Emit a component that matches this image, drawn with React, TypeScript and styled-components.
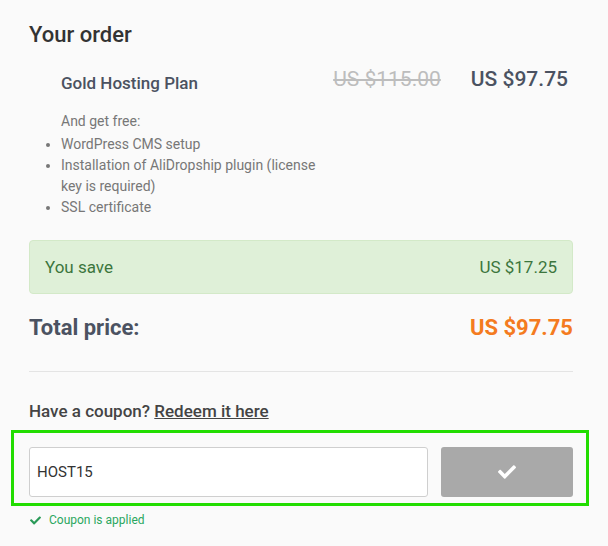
import React from "react";
import styled, { createGlobalStyle } from "styled-components";
import { FaCheck } from "react-icons/fa";

const GlobalStyle = createGlobalStyle`
  html, body {
    margin: 0;
    padding: 0;
    background: #fafafa;
    font-family: Roboto, "Liberation Sans", Arial, sans-serif;
  }
`;

const Page = styled.div`
  padding: 22px 35px 20px 29px;
`;

const Title = styled.h2`
  margin: 0;
  font-size: 22px;
  line-height: 26px;
  font-weight: 500;
  color: #333;
`;

const ItemRow = styled.div`
  display: flex;
  justify-content: space-between;
  align-items: flex-start;
  margin-top: 19px;
  padding: 0 5px 0 32px;
`;

const ItemInfo = styled.div`
  width: 265px;
`;

const ItemName = styled.div`
  margin-top: 4px;
  font-size: 17px;
  line-height: 24px;
  font-weight: 500;
  color: #4b5261;
`;

const FreeLabel = styled.div`
  margin-top: 16px;
  font-size: 14px;
  line-height: 21px;
  color: #777;
`;

const FreeList = styled.ul`
  margin: 2px 0 0;
  padding: 0;
  font-size: 14px;
  line-height: 21px;
  color: #777;
`;

const Prices = styled.div`
  display: flex;
  gap: 30px;
  font-size: 21px;
  line-height: 24px;
`;

const OldPrice = styled.span`
  color: #bdbdbd;
  text-decoration: line-through;
`;

const NewPrice = styled.span`
  color: #4b5261;
  font-weight: 500;
`;

const SaveBox = styled.div`
  display: flex;
  justify-content: space-between;
  align-items: center;
  height: 54px;
  box-sizing: border-box;
  margin-top: 22px;
  padding: 0 15px;
  background: #dff0d8;
  border: 1px solid #d3e9c8;
  border-radius: 4px;
  color: #3c763d;
  font-size: 17px;
`;

const TotalRow = styled.div`
  display: flex;
  justify-content: space-between;
  margin-top: 21px;
  font-size: 22px;
  line-height: 26px;
  font-weight: 700;
`;

const TotalLabel = styled.span`
  color: #4b5261;
`;

const TotalValue = styled.span`
  color: #f47b20;
`;

const Divider = styled.hr`
  margin: 30px 0 0;
  border: 0;
  border-top: 1px solid #e4e4e4;
`;

const CouponHeading = styled.div`
  margin-top: 29px;
  font-size: 17px;
  line-height: 20px;
  font-weight: 500;
  color: #444;

  a {
    color: #444;
    text-decoration: underline;
  }
`;

const CouponForm = styled.div`
  display: flex;
  gap: 13px;
  margin: 9px -16px 0 -18px;
  padding: 14px 13px 6px 15px;
  border: 3px solid #22dd00;
`;

const CouponInput = styled.input`
  flex: 1;
  height: 50px;
  box-sizing: border-box;
  padding: 0 7px;
  background: #fff;
  border: 1px solid #cfcfcf;
  border-radius: 3px;
  font-family: inherit;
  font-size: 15px;
  color: #333;
  outline: none;
`;

const ApplyButton = styled.button`
  width: 132px;
  height: 50px;
  display: flex;
  align-items: center;
  justify-content: center;
  background: #a9a9a9;
  border: 0;
  border-radius: 3px;
  color: #fff;
`;

const Applied = styled.div`
  display: flex;
  align-items: center;
  gap: 8px;
  margin-top: 7px;
  padding-left: 1px;
  font-size: 12px;
  line-height: 14px;
  color: #2aa760;

  svg {
    color: #2a9a58;
  }
`;

export default function App() {
  return (
    <>
      <GlobalStyle />
      <Page>
        <Title>Your order</Title>
        <ItemRow>
          <ItemInfo>
            <ItemName>Gold Hosting Plan</ItemName>
            <FreeLabel>And get free:</FreeLabel>
            <FreeList>
              <li>WordPress CMS setup</li>
              <li>Installation of AliDropship plugin (license key is required)</li>
              <li>SSL certificate</li>
            </FreeList>
          </ItemInfo>
          <Prices>
            <OldPrice>US $115.00</OldPrice>
            <NewPrice>US $97.75</NewPrice>
          </Prices>
        </ItemRow>
        <SaveBox>
          <span>You save</span>
          <span>US $17.25</span>
        </SaveBox>
        <TotalRow>
          <TotalLabel>Total price:</TotalLabel>
          <TotalValue>US $97.75</TotalValue>
        </TotalRow>
        <Divider />
        <CouponHeading>
          Have a coupon? <a href="#">Redeem it here</a>
        </CouponHeading>
        <CouponForm>
          <CouponInput defaultValue="HOST15" />
          <ApplyButton>
            <FaCheck size={18} />
          </ApplyButton>
        </CouponForm>
        <Applied>
          <FaCheck size={11} />
          <span>Coupon is applied</span>
        </Applied>
      </Page>
    </>
  );
}
